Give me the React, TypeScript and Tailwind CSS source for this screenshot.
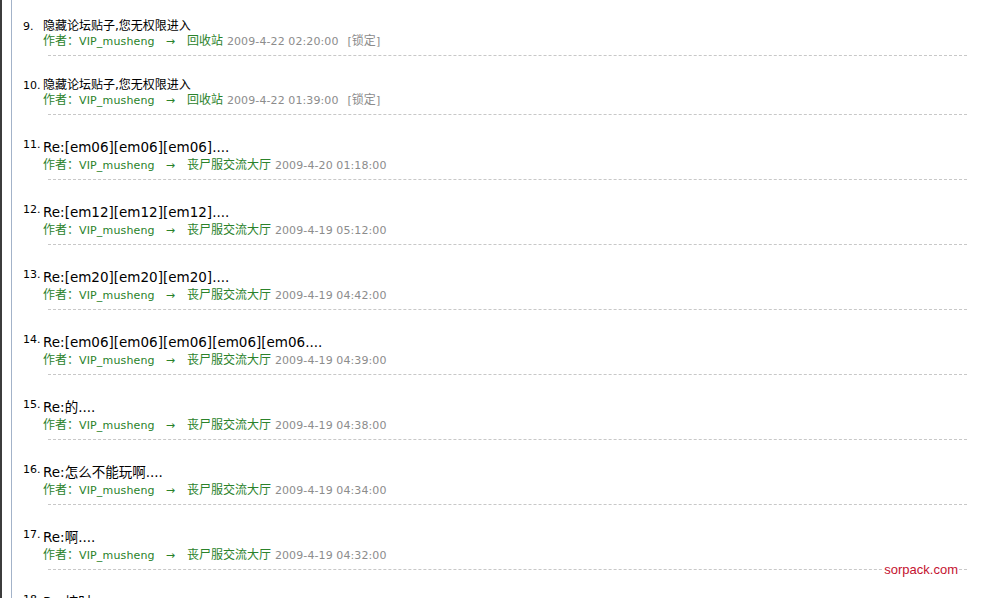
import React from "react";

type Item = {
  n: number;
  title: string;
  small?: boolean;
  loc: string;
  date: string;
  locked?: boolean;
};

const items: Item[] = [
  { n: 9, title: "隐藏论坛贴子,您无权限进入", small: true, loc: "回收站", date: "2009-4-22 02:20:00", locked: true },
  { n: 10, title: "隐藏论坛贴子,您无权限进入", small: true, loc: "回收站", date: "2009-4-22 01:39:00", locked: true },
  { n: 11, title: "Re:[em06][em06][em06]....", loc: "丧尸服交流大厅", date: "2009-4-20 01:18:00" },
  { n: 12, title: "Re:[em12][em12][em12]....", loc: "丧尸服交流大厅", date: "2009-4-19 05:12:00" },
  { n: 13, title: "Re:[em20][em20][em20]....", loc: "丧尸服交流大厅", date: "2009-4-19 04:42:00" },
  { n: 14, title: "Re:[em06][em06][em06][em06][em06....", loc: "丧尸服交流大厅", date: "2009-4-19 04:39:00" },
  { n: 15, title: "Re:的....", loc: "丧尸服交流大厅", date: "2009-4-19 04:38:00" },
  { n: 16, title: "Re:怎么不能玩啊....", loc: "丧尸服交流大厅", date: "2009-4-19 04:34:00" },
  { n: 17, title: "Re:啊....", loc: "丧尸服交流大厅", date: "2009-4-19 04:32:00" },
  { n: 18, title: "Re:按时....", loc: "丧尸服交流大厅", date: "2009-4-19 04:30:00" },
];

const FONT = { fontFamily: '"DejaVu Sans", "Noto Sans CJK SC", sans-serif' };

function Row({ it }: { it: Item }) {
  return (
    <div className="mb-[22px]">
      <div className="flex items-start">
        <div className="w-[20px] shrink-0 text-[11px] leading-[15px] text-black">{it.n}.</div>
        {it.small ? (
          <div className="text-[12px] leading-[15px] text-black">{it.title}</div>
        ) : (
          <div className="text-[13.5px] leading-[21px] text-black">{it.title}</div>
        )}
      </div>
      <div className="ml-[20px] flex items-center whitespace-nowrap text-[11px] leading-[15px]">
        <span className="text-[#2a822a]">
          <span className="text-[12px]">作者：</span>
          <span className="tracking-[0.15px]">VIP_musheng</span>
        </span>
        <span className="ml-[11px] mr-[12px] text-[#2a822a]">→</span>
        <span className="text-[12px] text-[#2a822a]">{it.loc}</span>
        <span className="ml-[4px] tracking-[0.1px] text-[#8c8c8c]">{it.date}</span>
        {it.locked && (
          <span className="ml-[9px] text-[#8c8c8c]">
            [<span className="text-[12px]">锁定</span>]
          </span>
        )}
      </div>
      <div className="ml-[25px] mt-[6px] border-t border-dashed border-[#c8c8c8]" />
    </div>
  );
}

export default function App() {
  return (
    <div className="relative h-[598px] overflow-hidden bg-white" style={FONT}>
      <div className="flex h-full border-l-2 border-[#3c3c3c]">
        <div className="ml-[9px] h-full flex-1 border-l border-[#a3b3c9] pl-[11px] pr-[29px] pt-[19px]">
          {items.map((it) => (
            <Row key={it.n} it={it} />
          ))}
        </div>
      </div>
      <div
        className="absolute right-[37px] top-[562px] bg-white px-[1px] text-[13px] leading-[16px] text-[#c4122f]"
        style={{ fontFamily: '"Liberation Sans", Arial, sans-serif' }}
      >
        sorpack.com
      </div>
    </div>
  );
}
